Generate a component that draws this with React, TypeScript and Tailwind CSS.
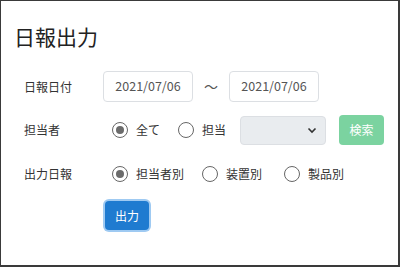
import React from "react";

const font = { fontFamily: '"Noto Sans CJK JP", "Noto Sans", sans-serif' };

function Radio({ label, checked }: { label: string; checked?: boolean }) {
  return (
    <label className="flex items-center">
      <span className="flex h-[16px] w-[16px] items-center justify-center rounded-full border-[1.5px] border-[#666] bg-white">
        {checked && <span className="h-[8px] w-[8px] rounded-full bg-[#6b6b6b]" />}
      </span>
      <span className="ml-[8px] text-[12px] text-[#333]">{label}</span>
    </label>
  );
}

function DateBox({ value }: { value: string }) {
  return (
    <div className="flex h-[31px] w-[90px] items-center justify-center rounded-[4px] border border-[#dcdfe3] bg-white text-[12.5px] text-[#555]">
      {value}
    </div>
  );
}

export default function App() {
  return (
    <div
      style={font}
      className="h-[267px] w-[400px] border-b-2 border-l border-r-2 border-t border-[#3a3a3a] bg-white"
    >
      <h1 className="pl-[13px] pt-[19px] text-[21px] leading-[32px] text-[#222]">日報出力</h1>

      <div className="mt-[19px] flex h-[31px] items-center">
        <div className="w-[102px] pl-[23px] text-[12px] text-[#333]">日報日付</div>
        <DateBox value="2021/07/06" />
        <span className="mx-[11px] text-[14px] text-[#555]">～</span>
        <DateBox value="2021/07/06" />
      </div>

      <div className="mt-[13px] flex h-[30px] items-center">
        <div className="w-[111px] pl-[23px] text-[12px] text-[#333]">担当者</div>
        <Radio label="全て" checked />
        <div className="ml-[18px]">
          <Radio label="担当" />
        </div>
        <div className="ml-[14px] flex h-[29px] w-[86px] items-center justify-end rounded-[4px] border border-[#dcdfe3] bg-[#e9ecef] pr-[8px]">
          <svg width="10" height="7" viewBox="0 0 10 7">
            <path d="M1.5 1.5 L5 5 L8.5 1.5" stroke="#333" strokeWidth="1.6" fill="none" />
          </svg>
        </div>
        <button className="ml-[13px] h-[30px] w-[45px] rounded-[4px] bg-[#7bd3a0] text-[12px] text-white">
          検索
        </button>
      </div>

      <div className="mt-[14px] flex h-[30px] items-center">
        <div className="w-[111px] pl-[23px] text-[12px] text-[#333]">出力日報</div>
        <Radio label="担当者別" checked />
        <div className="ml-[18px]">
          <Radio label="装置別" />
        </div>
        <div className="ml-[22px]">
          <Radio label="製品別" />
        </div>
      </div>

      <div className="mt-[10px] pl-[102px]">
        <div className="inline-block rounded-[6px] bg-[#9fcaf2] p-[2px]">
          <button className="h-[29px] w-[44px] rounded-[4px] bg-[#1f7bd0] text-[12px] text-white">
            出力
          </button>
        </div>
      </div>
    </div>
  );
}
